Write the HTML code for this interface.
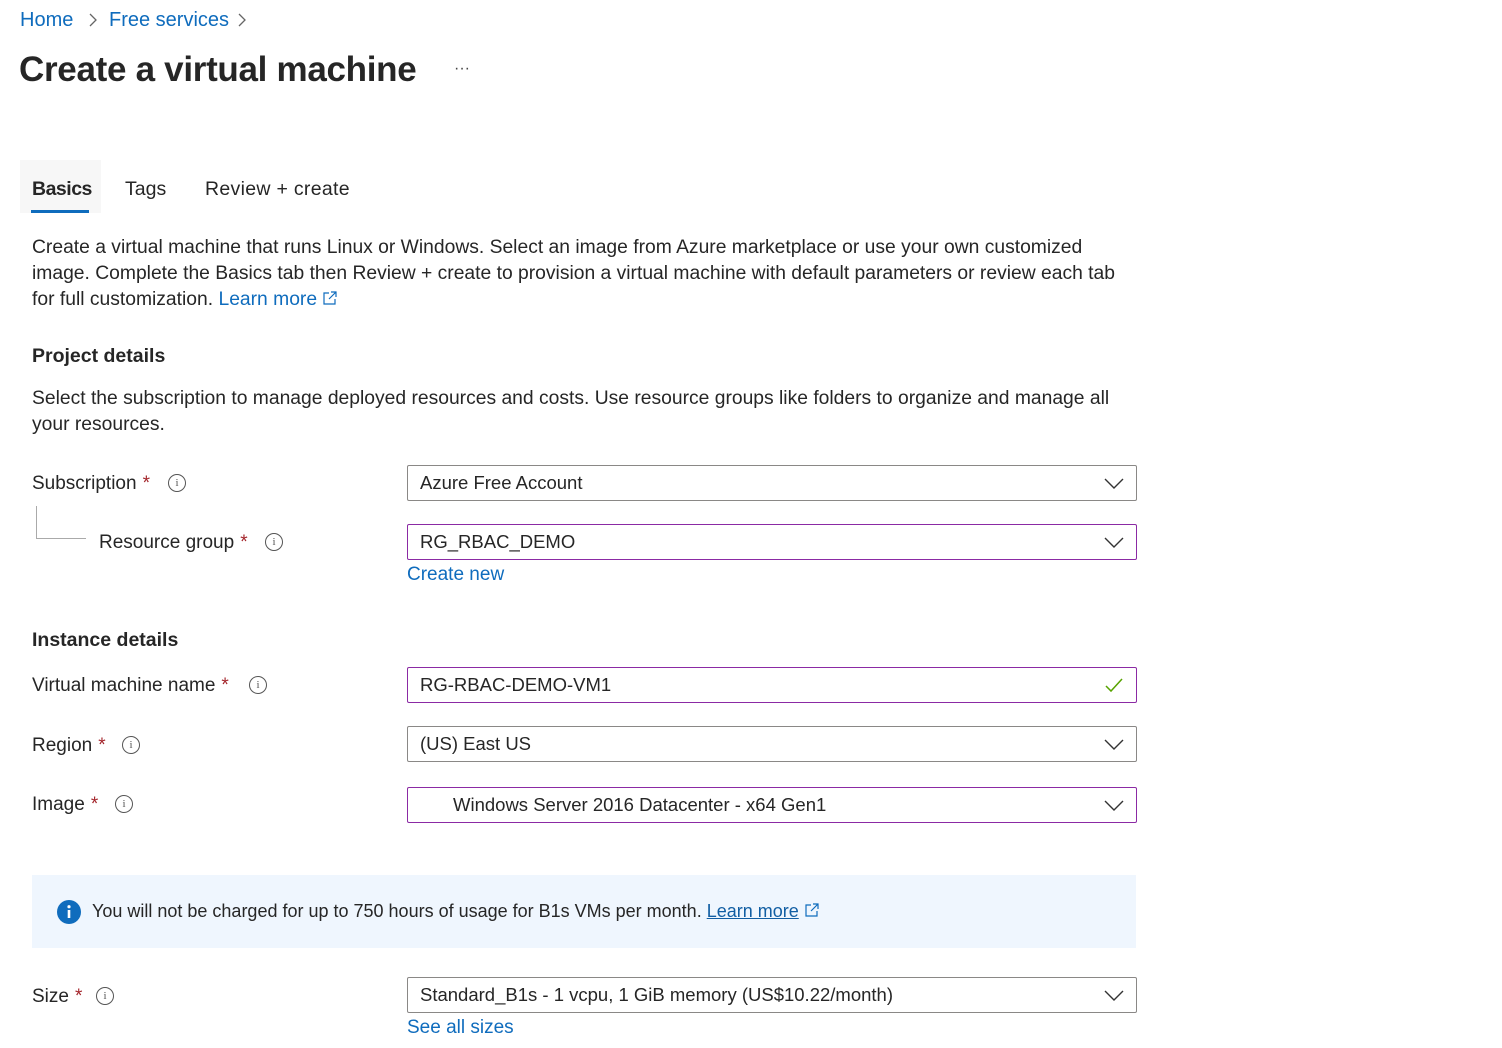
<!DOCTYPE html>
<html><head><meta charset="utf-8"><style>
*{margin:0;padding:0;box-sizing:border-box}
body{width:1502px;height:1048px;background:#fff;font-family:"Liberation Sans",sans-serif;color:#262626;position:relative;overflow:hidden;font-size:18px}
.a{position:absolute;white-space:nowrap}
.blue{color:#0f6cbd}
.lbl{font-size:19px;color:#262626}
.req{color:#a4262c;margin-left:6px}
.info{display:inline-block;width:18px;height:18px;border:1.3px solid #555;border-radius:50%;position:absolute;font-size:11px;line-height:16px;text-align:center;color:#555;font-family:"Liberation Serif",serif}
.box{position:absolute;left:407px;width:730px;height:36px;border:1px solid #8a8886;border-radius:2px;padding-left:12px;line-height:34px;font-size:18.5px;color:#262626;white-space:nowrap}
.box.p{border-color:#8b2aa4}
.chev{position:absolute;right:12px;top:10px}
h2{position:absolute;font-size:19.5px;font-weight:bold;color:#262626;white-space:nowrap}
</style></head><body>
<div class="a blue" style="left:20px;top:9px;font-size:20px">Home</div>
<svg class="a" style="left:88px;top:12px" width="10" height="16"><path d="M2 2l6 6-6 6" fill="none" stroke="#666" stroke-width="1.3"/></svg>
<div class="a blue" style="left:109px;top:9px;font-size:20px">Free services</div>
<svg class="a" style="left:237px;top:12px" width="10" height="16"><path d="M2 2l6 6-6 6" fill="none" stroke="#666" stroke-width="1.3"/></svg>
<div class="a" style="left:19px;top:50px;font-size:35px;font-weight:bold;color:#262626;letter-spacing:-0.3px">Create a virtual machine</div>
<div class="a" style="left:454px;top:60px;font-size:16px;color:#444">···</div>

<div class="a" style="left:20px;top:160px;width:81px;height:53px;background:#f7f7f7"></div>
<div class="a" style="left:32px;top:178px;font-size:19.5px;font-weight:bold;letter-spacing:-0.5px">Basics</div>
<div class="a" style="left:31px;top:210px;width:58px;height:3px;background:#0f6cbd"></div>
<div class="a" style="left:125px;top:178px;font-size:19.5px">Tags</div>
<div class="a" style="left:205px;top:178px;font-size:19.5px;letter-spacing:0.3px">Review + create</div>

<div class="a" style="left:32px;top:235px;line-height:26px;font-size:19.3px">Create a virtual machine that runs Linux or Windows. Select an image from Azure marketplace or use your own customized<br>image. Complete the Basics tab then Review + create to provision a virtual machine with default parameters or review each tab<br>for full customization. <span class="blue">Learn more</span> <svg width="16" height="16" style="vertical-align:-1px"><path d="M7 3H2v11h11V9M9 2h5v5M14 2L7 9" fill="none" stroke="#0f6cbd" stroke-width="1.2"/></svg></div>

<h2 style="left:32px;top:345px">Project details</h2>
<div class="a" style="left:32px;top:386px;line-height:26px;font-size:19.3px">Select the subscription to manage deployed resources and costs. Use resource groups like folders to organize and manage all<br>your resources.</div>

<div class="a lbl" style="left:32px;top:473px">Subscription<span class="req">*</span></div>
<span class="info" style="left:168px;top:474px">i</span>
<div class="a" style="left:36px;top:506px;width:1px;height:32px;background:#aaa"></div>
<div class="a" style="left:36px;top:538px;width:50px;height:1px;background:#aaa"></div>
<div class="a lbl" style="left:99px;top:532px">Resource group<span class="req">*</span></div>
<span class="info" style="left:265px;top:533px">i</span>

<div class="box" style="top:465px">Azure Free Account<svg class="chev" width="20" height="14"><path d="M1 3l9 9 9-9" fill="none" stroke="#333" stroke-width="1.4"/></svg></div>
<div class="box p" style="top:524px">RG_RBAC_DEMO<svg class="chev" width="20" height="14"><path d="M1 3l9 9 9-9" fill="none" stroke="#333" stroke-width="1.4"/></svg></div>
<div class="a blue" style="left:407px;top:564px;font-size:19px">Create new</div>

<h2 style="left:32px;top:629px">Instance details</h2>
<div class="a lbl" style="left:32px;top:675px">Virtual machine name<span class="req">*</span></div>
<span class="info" style="left:249px;top:676px">i</span>
<div class="box p" style="top:667px">RG-RBAC-DEMO-VM1<svg class="chev" style="top:8px" width="20" height="18"><path d="M2 10l5 5 11-12" fill="none" stroke="#57a300" stroke-width="1.5"/></svg></div>

<div class="a lbl" style="left:32px;top:735px">Region<span class="req">*</span></div>
<span class="info" style="left:122px;top:736px">i</span>
<div class="box" style="top:726px">(US) East US<svg class="chev" width="20" height="14"><path d="M1 3l9 9 9-9" fill="none" stroke="#333" stroke-width="1.4"/></svg></div>

<div class="a lbl" style="left:32px;top:794px">Image<span class="req">*</span></div>
<span class="info" style="left:115px;top:795px">i</span>
<div class="box p" style="top:787px;padding-left:45px">Windows Server 2016 Datacenter - x64 Gen1<svg class="chev" width="20" height="14"><path d="M1 3l9 9 9-9" fill="none" stroke="#333" stroke-width="1.4"/></svg></div>

<div class="a" style="left:32px;top:875px;width:1104px;height:73px;background:#eff6fe"></div>
<svg class="a" style="left:57px;top:900px" width="24" height="24"><circle cx="12" cy="12" r="12" fill="#0f6cbd"/><rect x="10.7" y="10" width="2.6" height="8" fill="#fff"/><circle cx="12" cy="6.7" r="1.6" fill="#fff"/></svg>
<div class="a" style="left:92px;top:901px;font-size:18px">You will not be charged for up to 750 hours of usage for B1s VMs per month. <span class="blue" style="text-decoration:underline;color:#115ea3">Learn more</span> <svg width="16" height="16" style="vertical-align:-1px"><path d="M7 3H2v11h11V9M9 2h5v5M14 2L7 9" fill="none" stroke="#0f6cbd" stroke-width="1.2"/></svg></div>

<div class="a lbl" style="left:32px;top:986px">Size<span class="req">*</span></div>
<span class="info" style="left:96px;top:987px">i</span>
<div class="box" style="top:977px">Standard_B1s - 1 vcpu, 1 GiB memory (US$10.22/month)<svg class="chev" width="20" height="14"><path d="M1 3l9 9 9-9" fill="none" stroke="#333" stroke-width="1.4"/></svg></div>
<div class="a blue" style="left:407px;top:1017px;font-size:19px">See all sizes</div>
</body></html>
